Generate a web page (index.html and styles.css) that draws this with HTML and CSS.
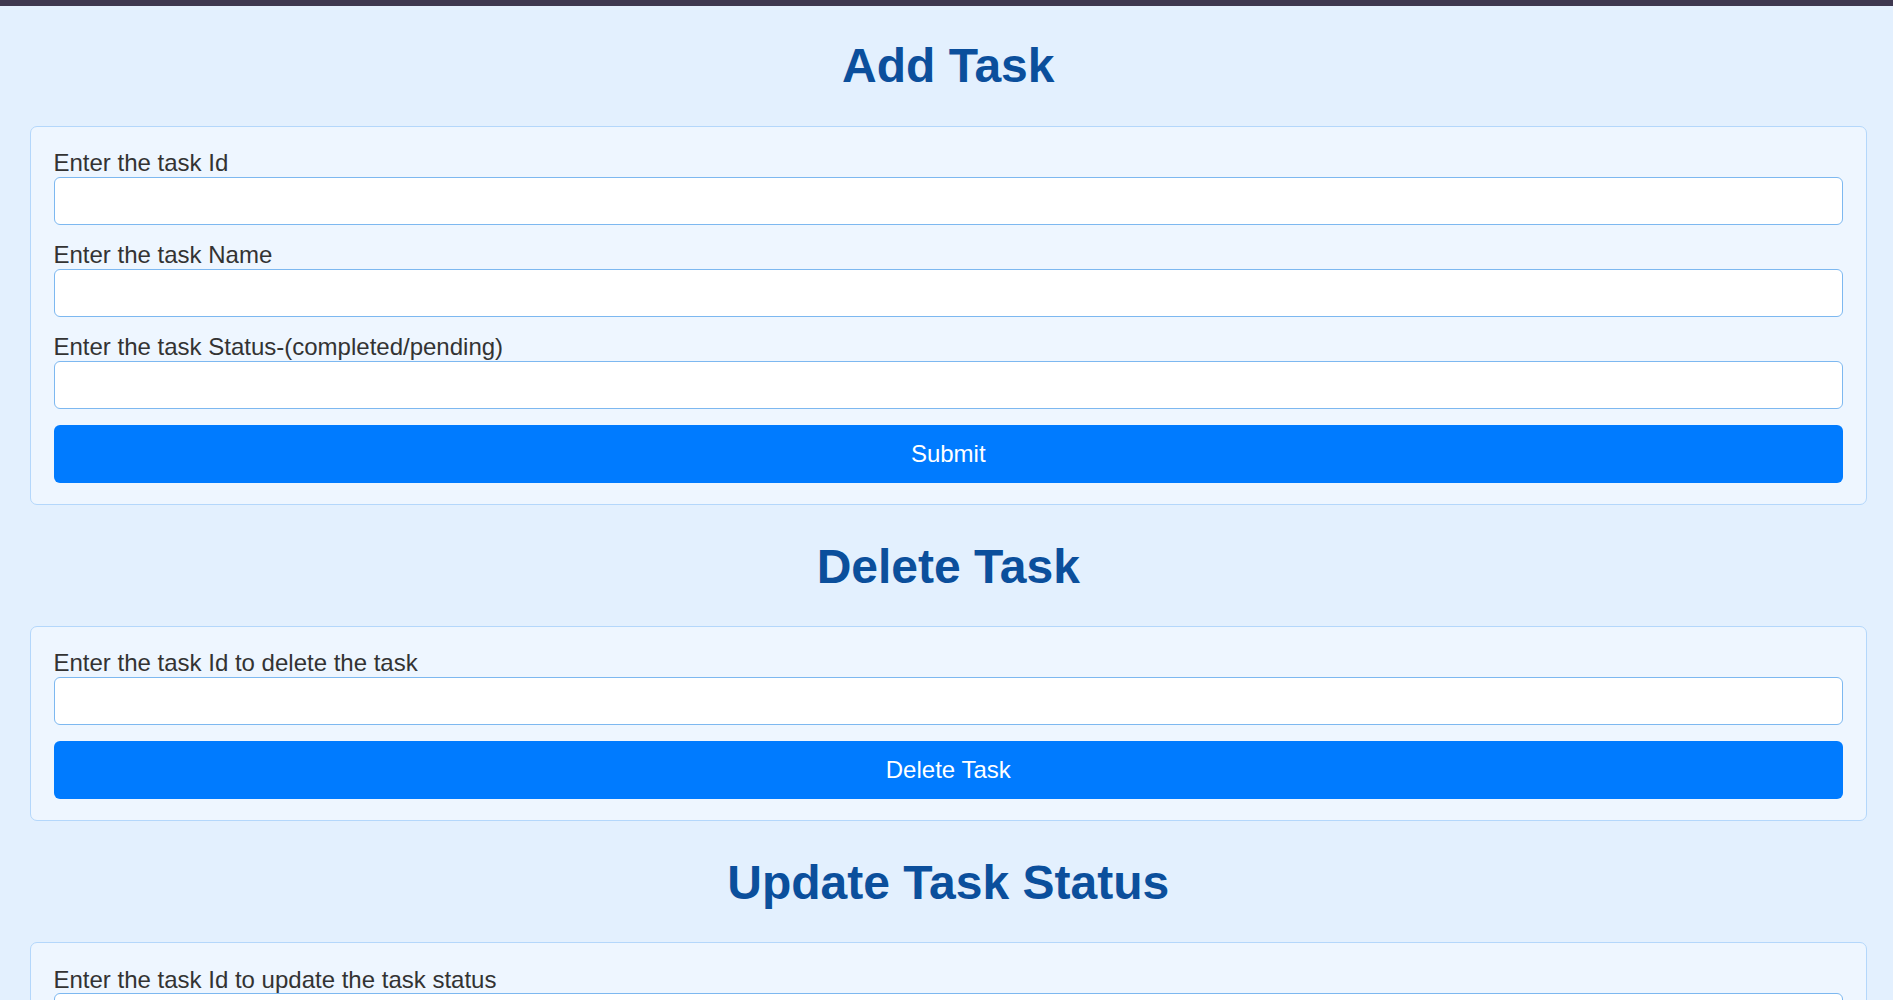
FILE: index.html
```html
<!DOCTYPE html>
<html lang="en">
<head>
<meta charset="utf-8">
<title>Task Manager</title>
<link rel="stylesheet" href="styles.css">
</head>
<body>
<div class="topbar"></div>
<main class="page">
  <h1 class="section-title">Add Task</h1>
  <form class="card">
    <label class="field-label" for="taskId">Enter the task Id</label>
    <input class="field-input" id="taskId" type="text">
    <label class="field-label" for="taskName">Enter the task Name</label>
    <input class="field-input" id="taskName" type="text">
    <label class="field-label" for="taskStatus">Enter the task Status-(completed/pending)</label>
    <input class="field-input" id="taskStatus" type="text">
    <button class="btn" type="button">Submit</button>
  </form>

  <h1 class="section-title">Delete Task</h1>
  <form class="card">
    <label class="field-label" for="deleteId">Enter the task Id to delete the task</label>
    <input class="field-input" id="deleteId" type="text">
    <button class="btn" type="button">Delete Task</button>
  </form>

  <h1 class="section-title">Update Task Status</h1>
  <form class="card">
    <label class="field-label" for="updateId">Enter the task Id to update the task status</label>
    <input class="field-input" id="updateId" type="text">
    <label class="field-label" for="updateStatus">Enter the new task Status-(completed/pending)</label>
    <input class="field-input" id="updateStatus" type="text">
    <button class="btn" type="button">Update Status</button>
  </form>
</main>
</body>
</html>
```
FILE: styles.css
```css
html, body {
  margin: 0;
  padding: 0;
}
html {
  scrollbar-width: none;
}
body {
  background: #e3f0fe;
  font-family: "Liberation Sans", Arial, sans-serif;
  color: #333333;
}
.topbar {
  height: 6px;
  background: #3e3850;
}
.page {
  padding: 0 26.5px 40px 30px;
}
.section-title {
  margin: 32.16px 0;
  font-size: 48px;
  line-height: 55.2px;
  font-weight: bold;
  text-align: center;
  color: #0b4f9c;
}
.card + .section-title {
  margin-top: 33.6px;
}
.card {
  display: flex;
  flex-direction: column;
  background: #eef6ff;
  border: 1px solid #b4d7fb;
  border-radius: 7px;
  padding: 22.5px 22.5px 21.3px 22.5px;
}
.field-label {
  display: block;
  font-size: 24px;
  line-height: 27.6px;
  color: #333333;
}
.field-input {
  box-sizing: border-box;
  height: 48.4px;
  margin: 0 0 16px 0;
  padding: 0 12px;
  background: #ffffff;
  border: 1.5px solid #7db8f0;
  border-radius: 6px;
  font-family: "Liberation Sans", Arial, sans-serif;
  font-size: 20px;
  outline: none;
}
.btn {
  height: 57.7px;
  padding: 0;
  border: none;
  border-radius: 6px;
  background: #007bff;
  color: #ffffff;
  font-family: "Liberation Sans", Arial, sans-serif;
  font-size: 24px;
  cursor: pointer;
}
```
